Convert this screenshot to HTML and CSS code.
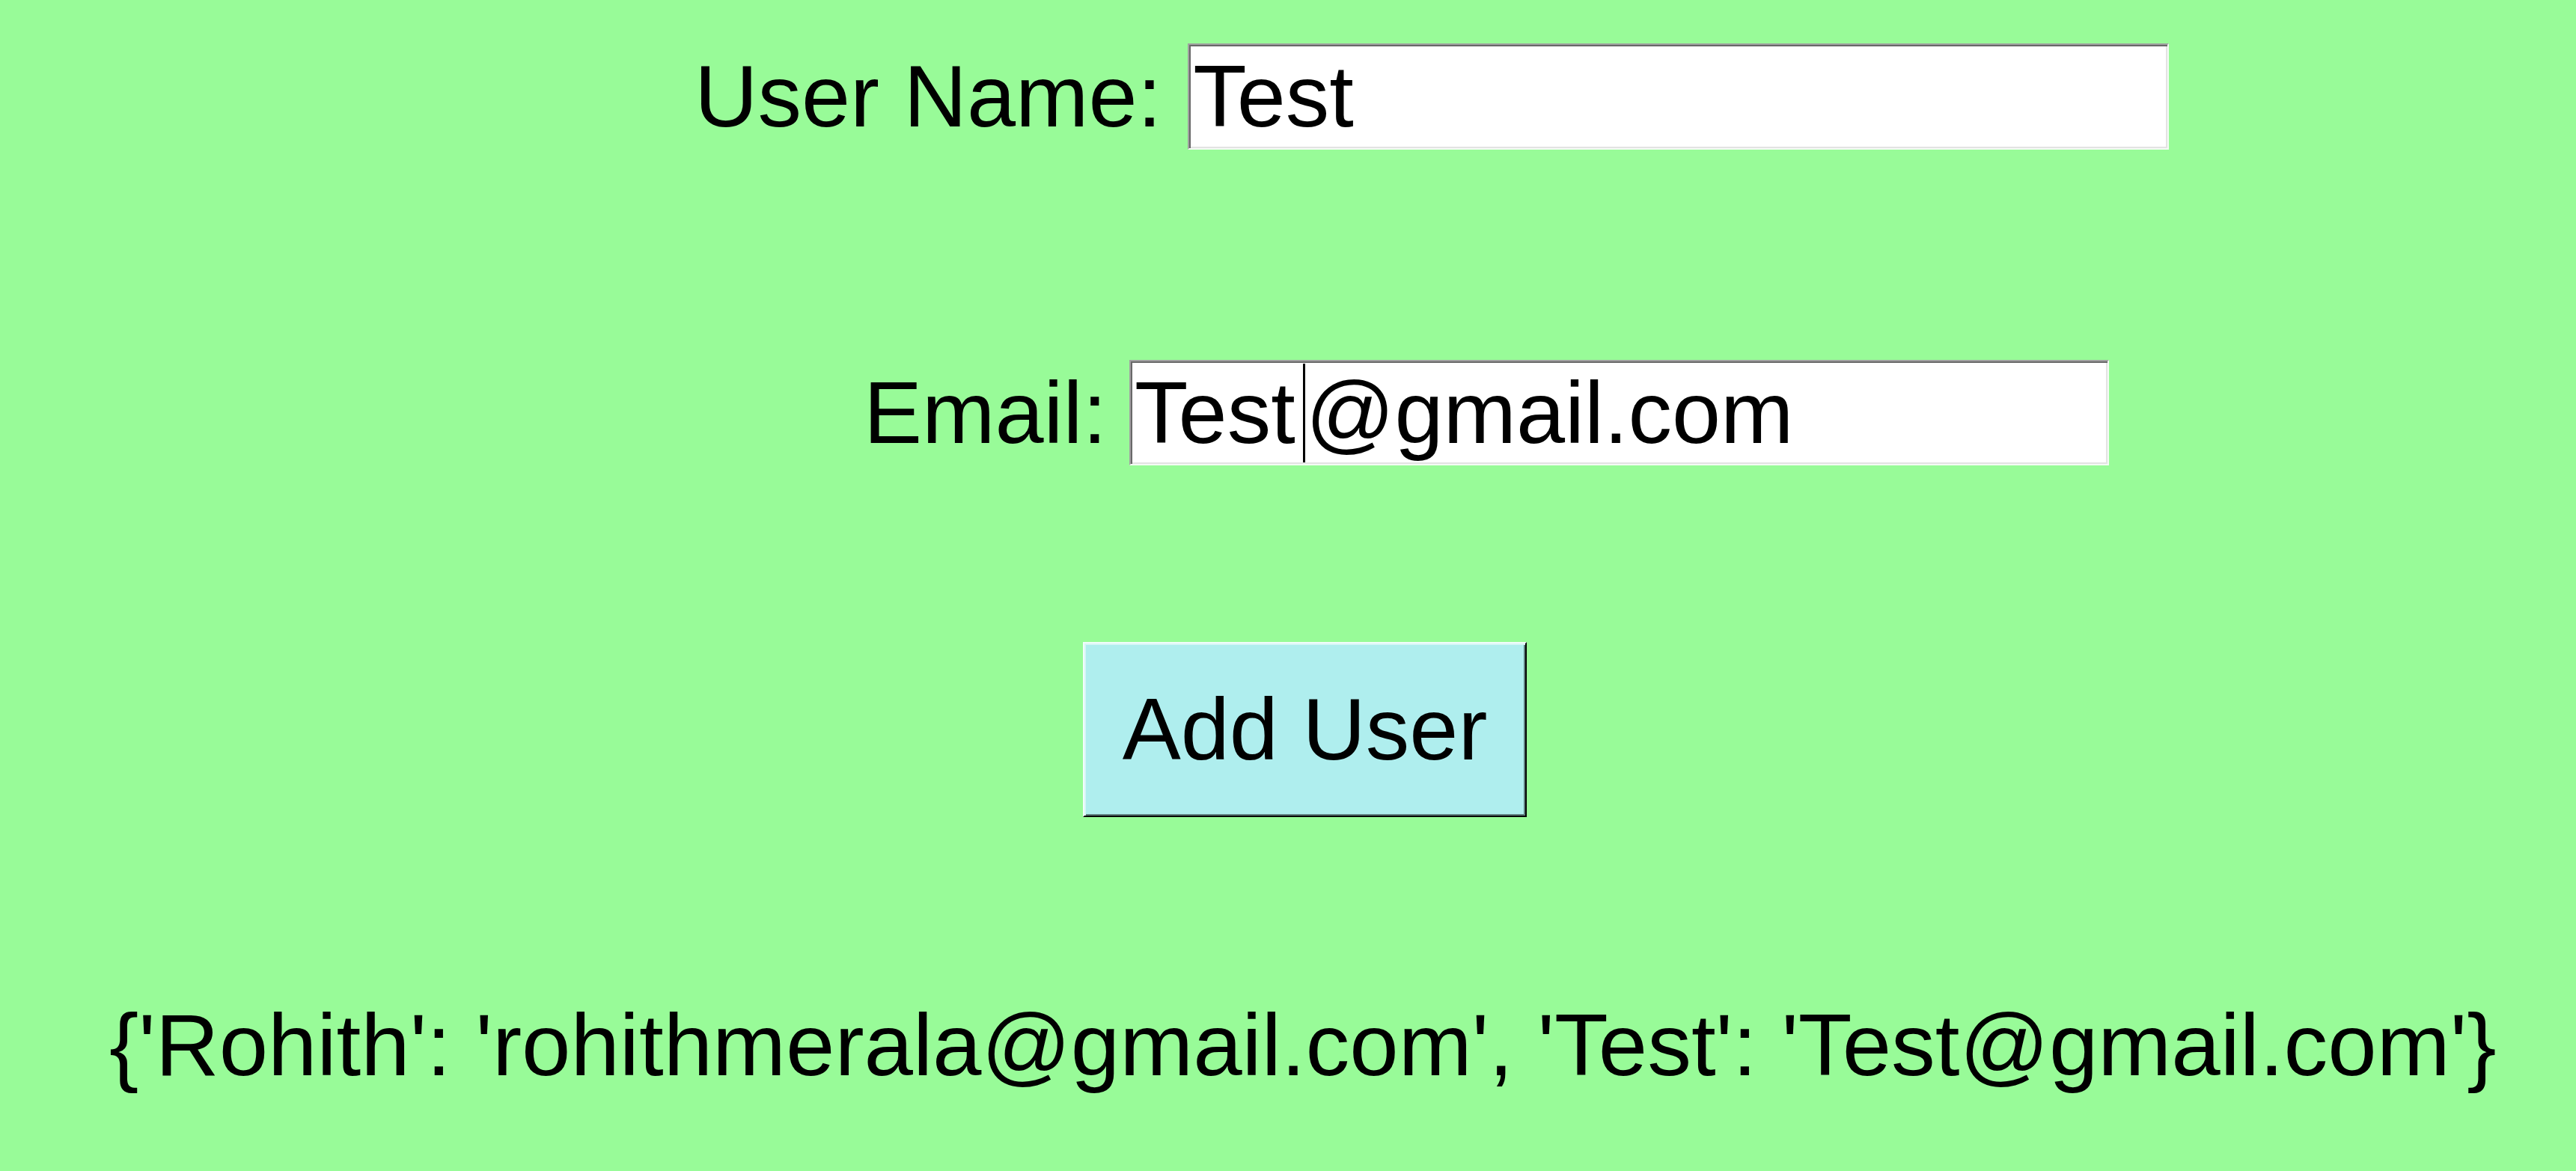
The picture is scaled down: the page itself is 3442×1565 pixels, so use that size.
FILE: index.html
```html
<!DOCTYPE html>
<html lang="en">
<head>
<meta charset="utf-8">
<title>Add User</title>
<link rel="stylesheet" href="styles.css">
</head>
<body>
<main class="app">
  <div class="row row-name">
    <span class="label">User Name:</span>
    <div class="entry entry-name" role="textbox">Test</div>
  </div>
  <div class="row row-email">
    <span class="label">Email:</span>
    <div class="entry entry-email" role="textbox">Test<span class="caret"></span>@gmail.com</div>
  </div>
  <div class="row row-button">
    <button class="btn" type="button">Add User</button>
  </div>
  <p class="output">{'Rohith': 'rohithmerala@gmail.com', 'Test': 'Test@gmail.com'}</p>
</main>
</body>
</html>
```

FILE: styles.css
```css
html, body {
  margin: 0;
  padding: 0;
  background: #98fb98;
}
body {
  width: 3442px;
  height: 1565px;
  overflow: hidden;
  font-family: "Liberation Sans", Arial, sans-serif;
  font-size: 117px;
  color: #000;
}
.app {
  display: flex;
  flex-direction: column;
  padding-top: 58px;
}
.row {
  display: flex;
  align-items: center;
}
.label {
  line-height: 132px;
  white-space: nowrap;
}
.row-name {
  padding-left: 928px;
}
.row-name .label {
  margin-right: 35px;
}
.row-email {
  margin-top: 281px;
  padding-left: 1154px;
}
.row-email .label {
  margin-right: 30px;
}
.entry {
  box-sizing: border-box;
  background: #fff;
  border: 2px solid;
  border-color: #a0a0a0 #f4fbf4 #f4fbf4 #a0a0a0;
  box-shadow: inset 2px 2px 0 #696969, inset -2px -2px 0 #e3e3e3;
  padding: 0 5px;
  line-height: 132px;
  white-space: nowrap;
  display: flex;
  align-items: center;
}
.entry-name {
  width: 1311px;
  height: 142px;
}
.entry-email {
  width: 1309px;
  height: 141px;
}
.caret {
  display: inline-block;
  width: 3px;
  height: 132px;
  background: #000;
  margin: 0 1px 0 10px;
}
.row-button {
  margin-top: 236px;
  padding-left: 1447px;
}
.btn {
  box-sizing: border-box;
  width: 593px;
  height: 234px;
  padding: 0;
  margin: 0;
  font-family: inherit;
  font-size: 117px;
  line-height: 132px;
  color: #000;
  background: #afeeee;
  border: 2px solid;
  border-color: #f2fcfc #000 #000 #f2fcfc;
  box-shadow: inset 2px 2px 0 #d6f6f6, inset -2px -2px 0 #5f7f7f;
  border-radius: 0;
}
.output {
  margin: 239px 0 0 0;
  padding-left: 146px;
  font-size: 117.6px;
  line-height: 132px;
  white-space: nowrap;
}
```
